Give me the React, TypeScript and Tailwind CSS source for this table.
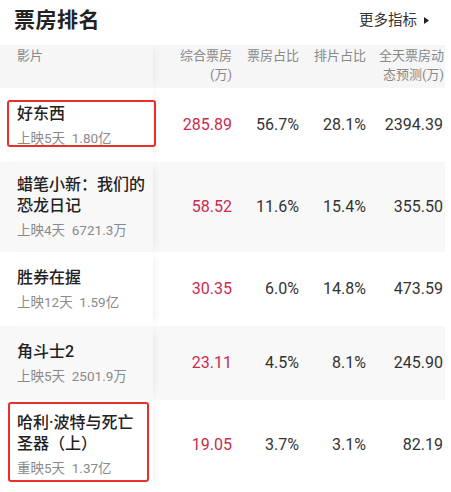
import React from "react";

type Movie = {
  name: string[];
  info: string;
  box: string;
  boxShare: string;
  showShare: string;
  forecast: string;
  marked?: "top" | "bottom";
};

const movies: Movie[] = [
  { name: ["好东西"], info: "上映5天  1.80亿", box: "285.89", boxShare: "56.7%", showShare: "28.1%", forecast: "2394.39", marked: "top" },
  { name: ["蜡笔小新：我们的", "恐龙日记"], info: "上映4天  6721.3万", box: "58.52", boxShare: "11.6%", showShare: "15.4%", forecast: "355.50" },
  { name: ["胜券在握"], info: "上映12天  1.59亿", box: "30.35", boxShare: "6.0%", showShare: "14.8%", forecast: "473.59" },
  { name: ["角斗士2"], info: "上映5天  2501.9万", box: "23.11", boxShare: "4.5%", showShare: "8.1%", forecast: "245.90" },
  { name: ["哈利·波特与死亡", "圣器（上）"], info: "重映5天  1.37亿", box: "19.05", boxShare: "3.7%", showShare: "3.1%", forecast: "82.19", marked: "bottom" },
];

const font = { fontFamily: '"Roboto", "Noto Sans CJK SC", sans-serif' };

export default function App() {
  return (
    <div className="w-[451px] h-[492px] overflow-hidden bg-white text-[#222]" style={font}>
      {/* title bar */}
      <div className="flex items-center justify-between h-[45px] pl-[14px] pr-[22px] pb-[4px]">
        <h1 className="text-[21px] font-bold leading-none tracking-[0.5px]">票房排名</h1>
        <div className="flex items-center gap-[7px] text-[14.5px] text-[#333]">
          <span>更多指标</span>
          <svg width="5" height="7" viewBox="0 0 5 7">
            <path d="M0 0 L5 3.5 L0 7 Z" fill="#222" />
          </svg>
        </div>
      </div>

      {/* table */}
      <div className="w-[445px]">
        <div className="grid grid-cols-[153px_79px_67px_67px_79px] h-[43px] bg-[#f6f6f6] text-[13px] leading-[19px] text-[#888]">
          <div className="pl-[17px] pt-[1px] shadow-[6px_0_8px_-5px_rgba(0,0,0,0.08)] relative z-10 bg-[#f6f6f6]">影片</div>
          <div className="text-right pt-[1px]">
            综合票房
            <br />
            (万)
          </div>
          <div className="text-right pt-[1px]">票房占比</div>
          <div className="text-right pt-[1px]">排片占比</div>
          <div className="text-right pt-[1px] pr-[1px]">
            全天票房动
            <br />
            态预测(万)
          </div>
        </div>

        {movies.map((m, i) => {
          const bg = i % 2 === 1 ? "bg-[#f8f8f8]" : "bg-white";
          return (
            <div key={m.box} className={`grid grid-cols-[153px_79px_67px_67px_79px] min-h-[74px] ${bg}`}>
              <div className={`relative z-10 flex flex-col justify-center pl-[17px] py-[12px] shadow-[6px_0_8px_-5px_rgba(0,0,0,0.08)] ${bg}`}>
                <div className="text-[16px] leading-[21px] font-medium text-[#222]">
                  {m.name.map((line) => (
                    <div key={line}>{line}</div>
                  ))}
                </div>
                <div className="mt-[5px] text-[13.5px] leading-[19px] text-[#8a8a8a] whitespace-pre">{m.info}</div>
                {m.marked === "top" && (
                  <div className="absolute left-[7px] right-[-3px] top-[12px] bottom-[15px] border-2 border-[#ea2f2a] rounded-[3px]" />
                )}
                {m.marked === "bottom" && (
                  <div className="absolute left-[8px] right-[4px] top-[2px] bottom-[8px] border-2 border-[#ea2f2a] rounded-[3px]" />
                )}
              </div>
              <div className="flex items-center justify-end text-[16px] text-[#cc2a4f]">{m.box}</div>
              <div className="flex items-center justify-end text-[16px] text-[#333]">{m.boxShare}</div>
              <div className="flex items-center justify-end text-[16px] text-[#333]">{m.showShare}</div>
              <div className="flex items-center justify-end pr-[2px] text-[16px] text-[#333]">{m.forecast}</div>
            </div>
          );
        })}
      </div>
    </div>
  );
}
